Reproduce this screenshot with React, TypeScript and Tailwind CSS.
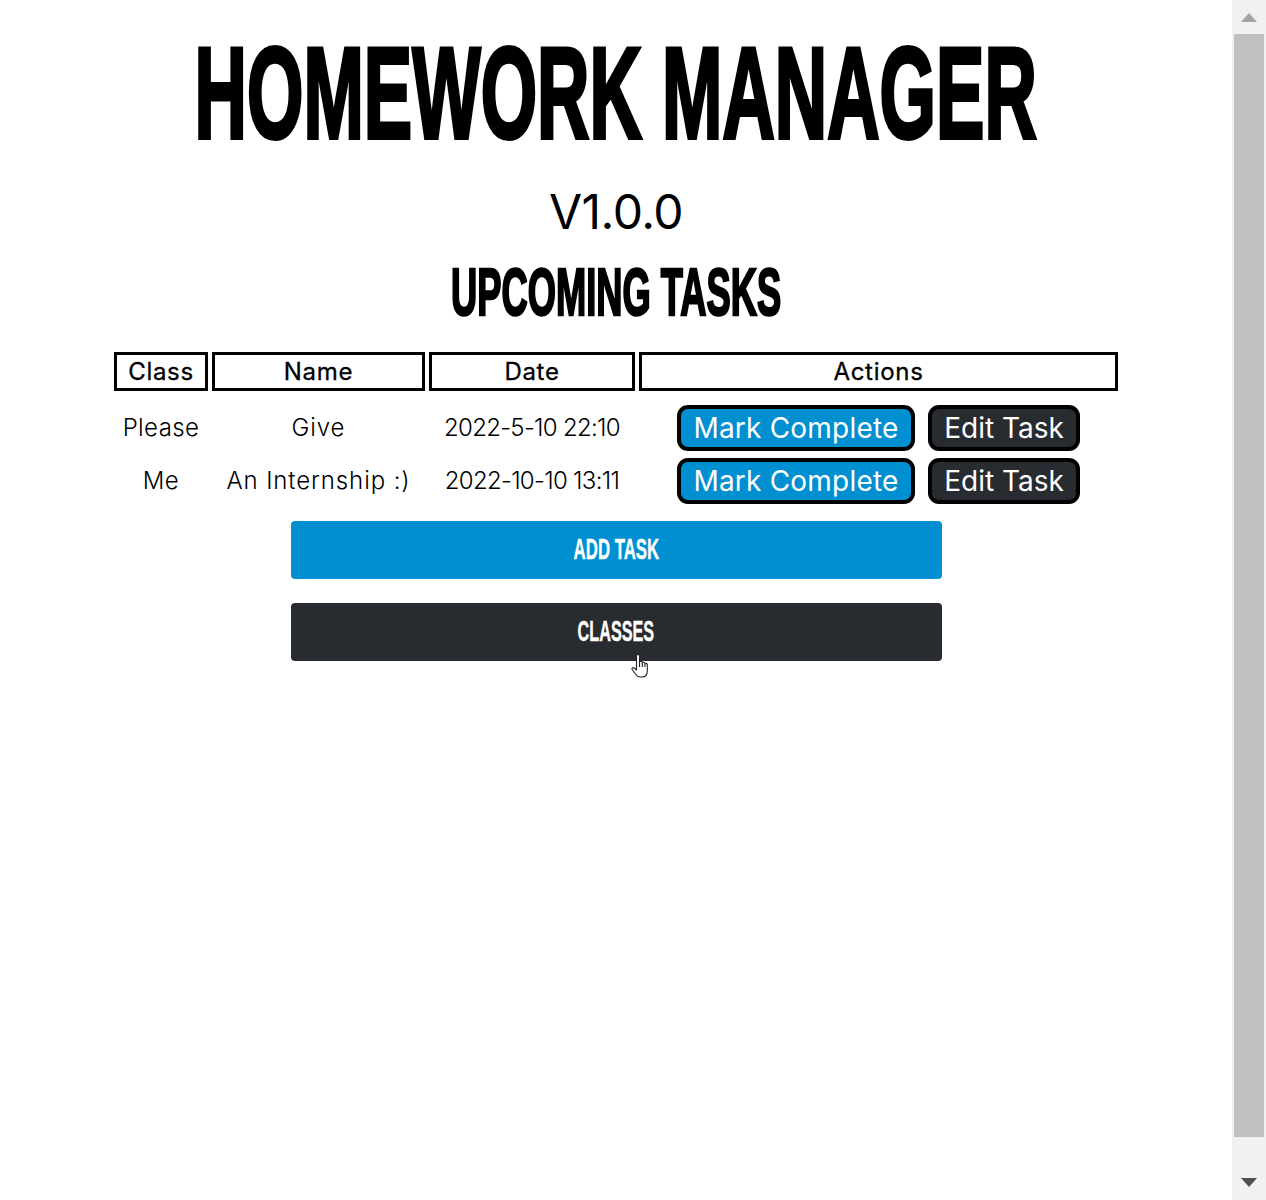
const tasks = [
  { cls: 'Please', name: 'Give', date: '2022-5-10 22:10' },
  { cls: 'Me', name: 'An Internship :)', date: '2022-10-10 13:11' },
]

const bodyFont = "font-['Inter','Liberation_Sans',sans-serif]"
const headFont = "font-['Liberation_Sans',Arial,sans-serif]"

function Scrollbar() {
  return (
    <aside className="w-[34px] h-[1200px] shrink-0 bg-[#f1f1f1] flex flex-col items-center">
      <div className="h-[34px] flex items-center justify-center">
        <svg width="16" height="9" viewBox="0 0 16 9"><path d="M8 0 16 9H0z" fill="#a3a3a3" /></svg>
      </div>
      <div className="w-[30px] h-[1103px] bg-[#c1c1c1]"></div>
      <div className="flex-1 w-full flex items-center justify-center pt-[27px]">
        <svg width="16" height="9" viewBox="0 0 16 9"><path d="M0 0H16L8 9z" fill="#505050" /></svg>
      </div>
    </aside>
  )
}

function HandCursor() {
  return (
    <svg className="absolute left-[631px] top-[654px]" width="18" height="24" viewBox="0 0 18 24" fill="white" stroke="#222" strokeWidth="1.1" strokeLinejoin="round">
      <path d="M5.5 13V2a1.5 1.5 0 0 1 3 0V8.5a1.4 1.4 0 0 1 2.8 0V9.5a1.3 1.3 0 0 1 2.6 0V10.5a1.2 1.2 0 0 1 2.4 0V17c0 3.5-2 6-5.5 6H9.3c-2.5 0-3.5-1-4.5-2.5L1.2 15.5c-.8-1.2.8-2.6 2-1.5L5.5 16Z" />
      <path d="M8.5 8.5V13M11.3 9.5V13M13.9 10.5V13" fill="none" />
    </svg>
  )
}

export default function App() {
  return (
    <div className="relative flex w-[1266px] h-[1200px] bg-white overflow-hidden text-black">
      <main className={`flex-1 min-w-0 overflow-hidden flex flex-col items-center pt-[28px] ${bodyFont}`}>
        {/* Title */}
        <h1 className={`h-[130px] mb-[26px] flex items-center justify-center w-full whitespace-nowrap ${headFont}`}>
          <span className="inline-block text-[130px] leading-none font-bold scale-x-[0.558] [-webkit-text-stroke:4px_black]">HOMEWORK MANAGER</span>
        </h1>
        <p className="h-[56px] mb-[22px] leading-[56px] text-[48px] tracking-[-0.5px]">V1.0.0</p>
        <h2 className={`h-[60px] mb-[30px] flex items-center justify-center w-full whitespace-nowrap ${headFont}`}>
          <span className="inline-block text-[66px] leading-none font-bold scale-x-[0.55] [-webkit-text-stroke:2.5px_black]">UPCOMING TASKS</span>
        </h2>

        {/* Task table */}
        <div className="grid grid-cols-[94px_213px_206px_479px] gap-x-1 gap-y-[7.5px] w-[1004px] text-[24px] text-center">
          {['Class', 'Name', 'Date', 'Actions'].map((h) => (
            <div key={h} className="h-[39px] mb-[6.5px] border-[3px] border-black flex items-center justify-center font-normal tracking-[0.7px] [-webkit-text-stroke:0.3px_black]">
              {h}
            </div>
          ))}
          {tasks.map((t) => (
            <div key={t.date} className="contents">
              <div className="h-[45.5px] flex items-center justify-center font-light tracking-[0.4px]">{t.cls}</div>
              <div className="h-[45.5px] flex items-center justify-center font-light whitespace-nowrap tracking-[0.9px]">{t.name}</div>
              <div className="h-[45.5px] flex items-center justify-center font-light whitespace-nowrap tracking-[-0.7px]">{t.date}</div>
              <div className="h-[45.5px] flex items-center justify-center gap-[13px]">
                <button className="w-[238px] h-full rounded-[11px] border-[4px] border-black bg-[#008fd0] text-white text-[28px] tracking-[0.2px] flex items-center justify-center whitespace-nowrap">Mark Complete</button>
                <button className="w-[152px] h-full rounded-[11px] border-[4px] border-black bg-[#282b30] text-white text-[28px] flex items-center justify-center whitespace-nowrap">Edit Task</button>
              </div>
            </div>
          ))}
        </div>

        <div className={`mt-[17.5px] w-[651px] flex flex-col gap-6 ${headFont}`}>
          <button className="h-[58px] pb-1 rounded bg-[#008fd0] text-white flex items-center justify-center overflow-hidden">
            <span className="inline-block text-[30px] font-bold scale-x-[0.56] whitespace-nowrap [-webkit-text-stroke:0.4px_white]">ADD TASK</span>
          </button>
          <button className="h-[58px] pb-1 rounded bg-[#282b30] text-white flex items-center justify-center overflow-hidden">
            <span className="inline-block text-[30px] font-bold scale-x-[0.54] whitespace-nowrap [-webkit-text-stroke:0.4px_white]">CLASSES</span>
          </button>
        </div>
      </main>
      <Scrollbar />
      <HandCursor />
    </div>
  )
}
